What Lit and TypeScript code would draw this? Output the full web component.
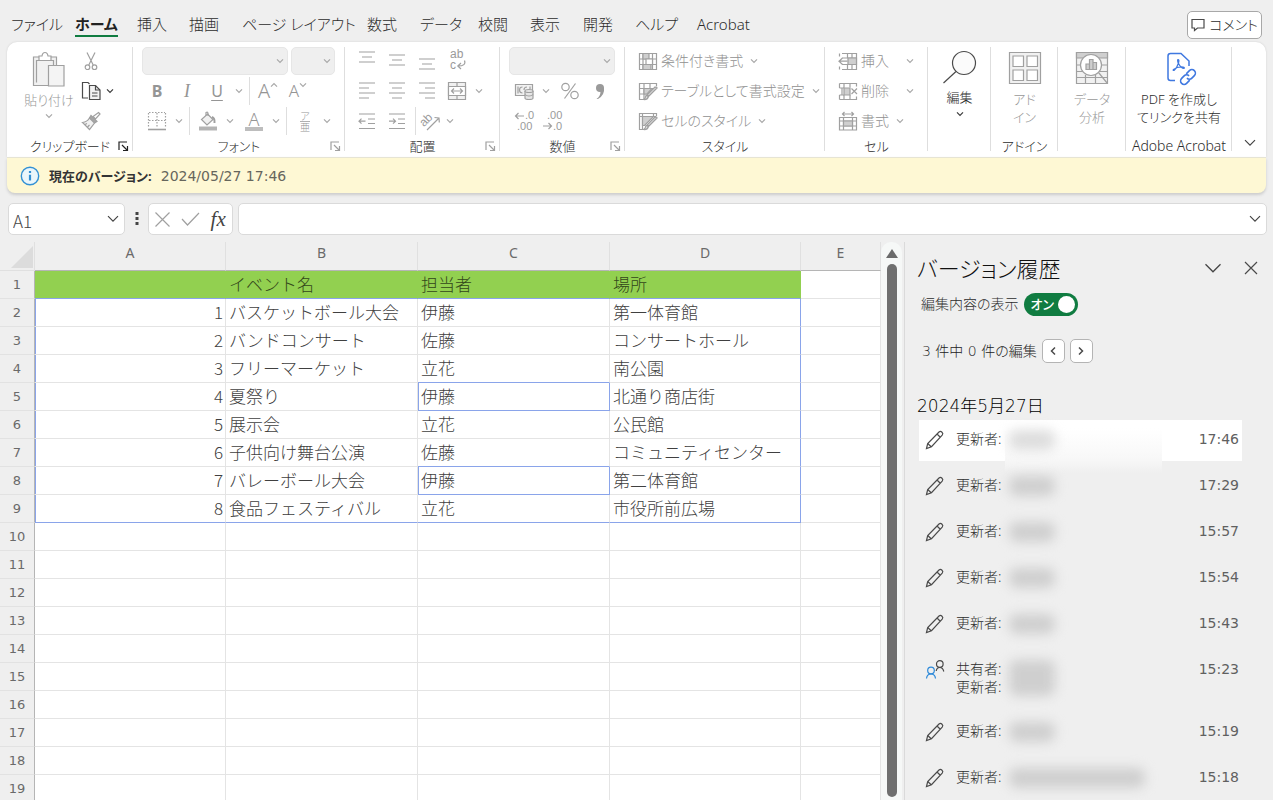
import { LitElement, html, svg, css, nothing } from "lit";
import { customElement } from "lit/decorators.js";
import { classMap } from "lit/directives/class-map.js";

const chevron = (cls = "") => html`<svg class="chev ${cls}" viewBox="0 0 8 6" aria-hidden="true"><path d="M1 1.3 4 4.3 7 1.3" /></svg>`;

const icon = (body: unknown, w = 20, h = 20, cls = "") =>
  html`<svg class="ico ${cls}" width=${w} height=${h} viewBox="0 0 ${w} ${h}" aria-hidden="true">${body}</svg>`;

const ICONS = {
  paste: icon(svg`
    <path class="tint" d="M1.500 5.500H24V34.500H1.500z" stroke="none"/>
    <path d="M17 34.500H1.500V6H7M19 6h5.500v8"/><path d="M4.500 31.500V9.500H21.500V14"/>
    <path fill="#fff" d="M7 9.500V5h3q.5-3.500 3-3.500T16 5h3v4.500z"/>
    <path fill="#f4f4f4" d="M16.500 14.500h15.500v20.500H16.500z"/>`, 34, 36),
  cut: icon(svg`<path d="M6 1.500 12.200 14M14 1.500 7.800 14"/><circle cx="6.500" cy="16.200" r="2.300"/><circle cx="13.500" cy="16.200" r="2.300"/>`),
  copy: icon(svg`<path d="M7 17H1.500V1.500h5.500l1.500 1.500"/><path class="tint" d="M8.500 4.500h6l4.500 4.500v9.500H8.500z"/><path d="M14.500 4.500V9H19M11 12h5.500M11 15h5.500"/>`, 20, 20, "dark"),
  brush: icon(svg`<path d="M17.500 1.500 19 3l-4.500 5-2.500-2.500z"/><path d="M10 4.500l6 6-2.500 1.500-5-5z" fill="#a6a6a6"/><path class="tint" d="M8.500 7 13.500 12l-5 6.500L1.500 11.500Q6 11 8.500 7z"/><path d="M4 13.500l2-1M6.500 16l2-2"/>`),
  border: icon(svg`<path stroke-dasharray="1.500 1.500" d="M2 1.500h16M1.500 2v15M18.500 2v15M10 2v15M2 9.500h16"/><path stroke-width="1.600" d="M1 18.500h18"/>`),
  fill: icon(svg`<path class="tint" d="M9.500 3 15 8.500 9 14 3.500 8.500z"/><path d="M8 4.500V1.500q2-1 2 1V5"/><path stroke-width="2" d="M14 6q3 1 2.500 6"/><path class="solid" d="M1 15.500h18v4H1z"/>`),
  indentDec: icon(svg`<path d="M2 3h16M11 8h7M11 12.500h7M2 17.500h16M8.500 10.200H2M4.500 7.700 2 10.200l2.500 2.500"/>`),
  indentInc: icon(svg`<path d="M2 3h16M11 8h7M11 12.500h7M2 17.500h16M2 10.200h6.500M6 7.700l2.500 2.500L6 12.700"/>`),
  merge: icon(svg`<path class="tint" d="M1.500 1.500h17v17h-17z"/><path d="M1.500 5.500h17M1.500 14.500h17M10 1.500v4M10 14.500v4"/><path fill="#fff" d="M1.500 5.500h17v9h-17z"/><path d="M4.500 10h11M7 7.500 4.500 10 7 12.500M13 7.500l2.500 2.500-2.500 2.500"/>`),
  orient: icon(svg`<path d="M7 19 19 7M14.500 6.500 19 7l.3 4.500"/><text x="0" y="13" font-size="12" transform="rotate(-45 6 10)">ab</text>`, 22, 20),
  wrap: icon(svg`<text x="3" y="7" font-size="12">ab</text><text x="3" y="18" font-size="12">c</text><path d="M17.500 9.500q2 5.500-6.500 5.500M14 12l-3.200 3 3.200 3"/>`),
  currency: icon(svg`<path class="tint" d="M1.500 3.500h17v11h-17z"/><path d="M4 5.500v7M16 5.500V8M8.500 6q-3 0-3 3t3 3M13 6q-3 0-3 3"/><path fill="#e6e6e6" d="M11 10v7q0 1.500 4 1.500t4-1.500v-7"/><ellipse fill="#e6e6e6" cx="15" cy="10" rx="4" ry="1.500"/><path d="M11 13.500q1 1.500 4 1.500t4-1.500"/>`),
  percent: icon(svg`<circle cx="5.500" cy="6" r="3.700"/><circle cx="14.500" cy="14" r="3.700"/><path d="M15.500 2.500 4.500 17.500"/>`),
  comma: icon(svg`<circle class="solid3" cx="10" cy="7" r="4"/><path class="solid3" d="M10 10.500l4-4q1 7.500-6 11.500H6.500q4-3 4-7.500z"/>`),
  decInc: icon(svg`<text x="11" y="8" font-size="11">.0</text><text x="3" y="19" font-size="11">.00</text><path d="M10 5H1.500M4.500 2 1.500 5l3 3"/>`, 20, 20),
  decDec: icon(svg`<text x="3" y="8" font-size="11">.00</text><text x="9" y="19" font-size="11">.0</text><path d="M-1 15h8M4.500 12l3 3-3 3"/>`, 20, 20),
  cond: icon(svg`<path d="M1.500 2.500h17v16h-17zM1.500 8h17M1.500 13.500h17M5 2.500v16M14.500 2.500v16"/><path class="solid2" d="M5 2.500h6V8H5zM5 13.500h8v5H5z"/><path fill="#fff" d="M8 8h6.500v5.500H8z"/>`),
  tableFmt: icon(svg`<path d="M12 2.500H1.500v16H6M1.500 7.500H16M1.500 13H9M6 2.500v16M12 2.500v6M12 2.500h6.500v3"/><path class="solid2" d="M6 7.500h8l-5 5.500H6z"/><path fill="#ddd" d="M19 7 11 15l-2-1 8-8zM10.500 15.500q-1 3.500-5 3 2-1 2.500-4z"/>`),
  cellStyle: icon(svg`<path d="M8 18.500H1.500v-16h17v3M1.500 5.500H18M4.500 2.500v16M15.500 2.500V5"/><path class="solid2" d="M4.500 5.500h11l-9 9h-2z"/><path fill="#ddd" d="M19 7 11 15l-2-1 8-8zM10.500 15.500q-1 3.500-5 3 2-1 2.500-4z"/>`),
  insert: icon(svg`<path d="M4 2.500h14.500v16H4M4 7h14.500M4 13.500h14.500M14 2.500v16M9.500 2.500V7M9.500 13.500v5M1.500 2.500v3M1.500 15.500v3"/><path class="solid2" d="M10 7h8.500v6.500H10z"/><path d="M9.500 10.200H1M4.500 7 1 10.200l3.500 3.300"/>`),
  remove: icon(svg`<path d="M1.500 2.500h17v3M1.500 2.500V7M1.500 18.500h17v-3M1.500 18.500V14M1.500 7h5M1.500 14h5M6 2.500v4M12 2.500v4M6 14v4.500M12 14v4.500M4 7v7"/><path class="solid2" d="M6 7h6v7H6z"/><path d="M13.500 7.500l5.500 5.500M19 7.500 13.500 13"/>`),
  format: icon(svg`<path d="M4.500 3h11M6.500 1l-2 2 2 2M13.500 1l2 2-2 2M1.500 6.500h17v12.500h-17zM1.500 10h17M1.500 15h17M5.500 6.500V19M14.500 6.500V19"/><path class="solid2" d="M5.500 10h9v5h-9z"/>`),
  find: icon(svg`<circle cx="22" cy="12" r="11.500" fill="#fbfbfb"/><path d="M14 20.500 1.500 32"/>`, 36, 32, "dark"),
  addin: icon(svg`<path class="tint" d="M1.500 1.500h31v31h-31z"/><path fill="#fff" d="M5 5h10.500v10.500H5zM19 5h10.500v10.500H19zM5 19h10.500v10.500H5zM19 19h10.500v10.500H19z"/>`, 34, 34),
  analyze: icon(svg`<path class="tint" d="M1.500 1.500h31v31h-31z"/><path class="solid2" d="M1.500 1.500h31V7h-31z"/><path d="M1.500 14h31M1.500 20.500h31M1.500 26.500h31M10.500 24v8.500M20.500 24v8.500"/><circle cx="16" cy="14" r="10.500" fill="#fff"/><path d="M23.500 21.500l9 11"/><path class="solid2" d="M11 13h3.500v5.500H11zM14.500 8.500H18v10h-3.500zM18 11.500h3.500v7H18z"/>`, 34, 34),
  pdf: icon(svg`<path stroke-width="1.500" d="M13 29.500H8.500Q6 29.500 6 27V5Q6 2.500 8.500 2.500H19l8 7.500v5"/><path d="M16 8.500q1.500 0 .5 3.500-1.500 5-4.500 7.500-1.500 0-.5-1 4-3 9.500-2.500 2 .5 1 1.500-3 0-6-6-.8-3 0-3z"/><g stroke-width="1.600" transform="rotate(-45 26 26)"><path d="M25 29.500h-4.500a3.500 3.500 0 0 1 0-7h3.500a3.500 3.500 0 0 1 3.500 3.500"/><path d="M27 22.500h4.500a3.500 3.500 0 0 1 0 7h-3.500a3.500 3.500 0 0 1-3.500-3.500"/></g>`, 34, 34, "blue"),
  comment: icon(svg`<path d="M1 1.500h12v8.500H6.500L3.500 12.500V10H1z"/>`, 14, 14, "dark"),
  info: icon(svg`<circle cx="10" cy="10" r="8.700" fill="#eaf6fb" stroke-width="1.400"/><path stroke-width="2.200" d="M10 8.800v5.700M10 5v2"/>`, 20, 20, "azure"),
  launcher: icon(svg`<path d="M1 9V1h8M4 4l5.500 5.500M9.500 5v4.500H5"/>`, 11, 11, "sm"),
  pencil: icon(svg`<path d="M1.500 18.500l1.200-5L14 2q1.500-1.200 3 .2t.2 3L6.500 16.700zM12 4l3.300 3.200M2.700 13.500l3.500 3.300"/>`, 20, 20, "dark"),
  people: icon(svg`<g stroke="#2b88d8"><circle cx="6" cy="10.500" r="3.300"/><path d="M1.500 18.500q.5-4.500 4.500-4.500t4.500 4.500"/></g><g><circle cx="14.800" cy="4" r="3.300"/><path d="M11.200 11q.5-3.500 3.600-3.500t4 4"/></g>`, 20, 20, "dark"),
};

const hAlign = (long: number[], short: number[], dir: string, top: number) => {
  const inner = dir === "l" ? [2, 12] : dir === "r" ? [8, 18] : [5, 15];
  return icon(svg`<path d=${long.map((y) => `M2 ${y + top}h16`).join("") + short.map((y) => `M${inner[0]} ${y + top}H${inner[1]}`).join("")} />`);
};

interface Version { users: string[]; time: string; current?: boolean; wide?: boolean }

@customElement("app-root")
export class AppRoot extends LitElement {
  private tabs = ["ファイル", "ホーム", "挿入", "描画", "ページ レイアウト", "数式", "データ", "校閲", "表示", "開発", "ヘルプ", "Acrobat"];

  private rows: string[][] = [
    ["", "イベント名", "担当者", "場所"],
    ["1", "バスケットボール大会", "伊藤", "第一体育館"],
    ["2", "バンドコンサート", "佐藤", "コンサートホール"],
    ["3", "フリーマーケット", "立花", "南公園"],
    ["4", "夏祭り", "伊藤", "北通り商店街"],
    ["5", "展示会", "立花", "公民館"],
    ["6", "子供向け舞台公演", "佐藤", "コミュニティセンター"],
    ["7", "バレーボール大会", "伊藤", "第二体育館"],
    ["8", "食品フェスティバル", "立花", "市役所前広場"],
  ];

  private changed = [5, 8];

  private versions: Version[] = [
    { users: ["更新者:"], time: "17:46", current: true },
    { users: ["更新者:"], time: "17:29" },
    { users: ["更新者:"], time: "15:57" },
    { users: ["更新者:"], time: "15:54" },
    { users: ["更新者:"], time: "15:43" },
    { users: ["共有者:", "更新者:"], time: "15:23" },
    { users: ["更新者:"], time: "15:19" },
    { users: ["更新者:"], time: "15:18", wide: true },
  ];

  static styles = css`
    :host {
      display: flex;
      flex-direction: column;
      height: 100vh;
      overflow: hidden;
      background: #efefef;
      color: #2c2c2c;
      font: 300 14px/18px "Noto Sans", "Noto Sans CJK JP", sans-serif;
      font-feature-settings: "palt";
    }
    * { box-sizing: border-box; }
    button, input, select { font: inherit; color: inherit; font-feature-settings: inherit; margin: 0; padding: 0; border: 0; background: none; }
    button { display: inline-flex; align-items: center; justify-content: center; }
    .ico { display: block; flex: none; overflow: visible; fill: none; stroke: #a0a0a0; stroke-width: 1.2; }
    .ico text { fill: #9a9a9a; stroke: none; font-family: "Liberation Sans", sans-serif; }
    .ico .tint { fill: #f1f1f1; }
    .ico .solid { fill: #b4b4b4; stroke: none; }
    .ico .solid3 { fill: #9a9a9a; stroke: none; }
    .ico .solid2 { fill: #cfcfcf; }
    .ico.dark { stroke: #4a4a4a; }
    .ico.blue { stroke: #3f78e0; }
    .ico.azure { stroke: #3391d4; }
    .chev { width: 8px; height: 6px; flex: none; fill: none; stroke: #a8a8a8; stroke-width: 1.2; }
    .chev.dark { stroke: #3b3b3b; }
    .chev.big { width: 14px; height: 10px; stroke: #444; stroke-width: 0.7; }
    .chev.huge { width: 20px; height: 15px; stroke: #444; stroke-width: 0.5; }

    .top { display: flex; align-items: center; justify-content: space-between; height: 42px; padding: 7px 11px 0; flex: none; }
    .tabs { display: grid; grid-template-columns: 64px 62px 52px 53px 125px 53px 58px 52px 53px 52px 62px 60px; font-size: 15px; line-height: 22px; }
    .tab { justify-self: start; color: inherit; text-decoration: none; white-space: nowrap; padding-top: 1px; border-bottom: 2px solid transparent; }
    .tab.active { font-weight: 700; color: #222; border-color: #107c41; }
    .comment { width: 75px; height: 28px; gap: 4px; border: 1px solid #a8a8a8; border-radius: 5px; background: #fff; white-space: nowrap; }

    .ribbon { display: grid; grid-template-columns: 126px 212px 155px 125px 200px 103px 63px 67px 68px 106px minmax(35px, 1fr); margin: 0 7px; height: 115px; flex: none; background: #fff; border-radius: 10px 10px 0 0; box-shadow: 0 0 2px #ccc; }
    .group { display: flex; flex-direction: column; padding-top: 3px; background: linear-gradient(#dedede, #dedede) right 5px / 1px 104px no-repeat; }
    .group:last-child { background: none; }
    .body { height: 90px; flex: none; padding-top: 1px; }
    .foot { display: grid; grid-template-columns: 20px 1fr 20px; align-items: center; height: 22px; text-align: center; font-size: 13px; white-space: nowrap; }
    .foot.plain { grid-template-columns: 1fr; }
    .foot.caps { font-size: 14px; }
    .foot.dark .ico { stroke: #222; }
    .line { display: flex; align-items: center; height: 30px; }
    .ib { width: 30px; height: 28px; color: #959595; font-size: 16px; font-weight: 400; }
    .ib.narrow { width: 24px; }
    .cv { width: 14px; height: 28px; }
    .sep { width: 7px; height: 28px; background: linear-gradient(#dedede, #dedede) center / 1px 28px no-repeat; }
    .gap { width: 2px; }
    .ib.b { font-weight: 700; }
    .i { font-style: italic; font-family: "Liberation Serif", serif; font-size: 18px; }
    .u { text-decoration: underline; text-underline-offset: 3px; }
    .ib.grow { font-size: 20px; font-weight: 300; }
    .ib.shrink { font-size: 17px; font-weight: 300; }
    .grow .chev, .shrink .chev { align-self: flex-start; margin-top: 5px; }
    .up { transform: rotate(180deg); }
    .ib.fontcolor { flex-direction: column; font-size: 18px; line-height: 16px; font-weight: 300; }
    .fontcolor::after { content: ""; width: 18px; height: 4px; background: #bdbdbd; }
    .ib.ruby { flex-direction: column; font-size: 10px; line-height: 10px; font-weight: 300; }
    .ruby span + span { border-top: 1px solid #b0b0b0; }
    .pad-s { padding-left: 7px; }
    .pad-m { padding-left: 9px; }
    .pad-l { padding-left: 13px; }
    .combo { display: grid; align-items: center; height: 28px; }
    .combo > * { grid-area: 1 / 1; }
    .combo select { width: 100%; height: 100%; appearance: none; background: #efefef; border: 1px solid #e6e6e6; border-radius: 5px; opacity: 1; }
    .combo .chev { justify-self: end; margin-right: 4px; pointer-events: none; }
    .combo.name { width: 146px; margin-right: 3px; }
    .combo.size { width: 44px; }
    .combo.num { width: 106px; }
    .clip { display: grid; grid-template-columns: 60px 1fr; padding-left: 12px; }
    .large { display: flex; flex-direction: column; align-items: center; justify-content: flex-start; gap: 5px; width: 100%; height: 90px; padding-top: 6px; font-size: 13px; white-space: nowrap; }
    .clip .large { padding-top: 5px; gap: 4px; }
    .large.off { color: #989898; }
    .wide { gap: 3px; height: 28px; color: #909090; white-space: nowrap; }
    .wide .chev { margin-left: 4px; }
    .far .chev { margin-left: 14px; }
    .collapse { width: 100%; height: 30px; margin-top: 83px; }

    .banner { display: flex; align-items: center; gap: 9px; height: 36px; margin: 0 7px; padding: 0 13px; flex: none; background: #fef8d4; border-radius: 0 0 8px 8px; border-top: 1px solid #e6e4d4; box-shadow: 0 2px 3px #ccc; }
    .banner strong { color: #333; font-size: 13px; font-weight: 700; }
    .digits { font-family: "DejaVu Sans", "Noto Sans CJK JP", sans-serif; }
    .banner .digits { color: #66665c; font-weight: 400; }

    .formula { display: grid; grid-template-columns: 117px 23px 86px 1fr; margin: 10px 6px 0 8px; height: 32px; flex: none; }
    .box { display: flex; align-items: center; background: #fff; border: 1px solid #dadada; border-radius: 5px; }
    .box input { flex: 1; min-width: 0; height: 100%; padding: 2px 4px 0; }
    .namebox input { font-family: "Noto Sans CJK JP", sans-serif; font-size: 17px; color: #444; font-feature-settings: normal; }
    .box button { width: 22px; height: 28px; }
    .box.fx { margin-right: 1px; justify-content: space-around; }
    .box.fx button { width: 28px; }
    .box.last { margin-left: 4px; }
    .fxl { font: italic 21px/24px "Liberation Serif", serif; color: #444; }
    .dots { display: grid; place-items: center; }

    .main { display: grid; grid-template-columns: minmax(0, 1fr) 23px 369px; flex: 1; min-height: 0; margin-top: 7px; }
    .sheet { overflow: hidden; }
    table { width: 100%; border-collapse: separate; border-spacing: 0; table-layout: fixed; font-feature-settings: normal; }
    col.n { width: 35px; }
    col.d { width: 192px; }
    col.a { width: 191px; }
    th { font-weight: 400; color: #6a6a6a; padding: 0; }
    thead th { height: 29px; padding-bottom: 7px; border-bottom: 1px solid #b5b5b5; border-right: 1px solid #e0e0e0; }
    thead th:first-child { padding: 0 1px 1px 11px; border-color: #e0e0e0; }
    thead svg { display: block; width: 22px; height: 22px; margin-top: 3px; fill: #dcdcdc; }
    tbody th { height: 28px; font: 13px/20px "DejaVu Sans", sans-serif; border-right: 1px solid #b5b5b5; border-bottom: 1px solid #e2e2e2; }
    td { height: 28px; padding: 0 2px 2px 3px; background: #fff; border-right: 1px solid #e4e4e4; border-bottom: 1px solid #e4e4e4; color: #404040; font: 300 17px/20px "Noto Sans CJK JP", sans-serif; white-space: nowrap; overflow: hidden; }
    td.num { text-align: right; }
    td.green { background: #92d050; border-right-color: #92d050; color: #32461a; }
    td.bb { border-bottom-color: #8aa4ea; }
    td.br { border-right-color: #8aa4ea; }
    td.bl { box-shadow: inset 1px 0 #8aa4ea; }

    .scroll { display: flex; flex-direction: column; align-items: center; gap: 6px; margin-right: 2px; padding: 7px 0 3px; background: #f6f8f7; border-radius: 10px 10px 0 0; }
    .scroll svg { width: 12px; height: 9px; fill: #6b6b6b; flex: none; }
    .thumb { width: 10px; flex: 1; border-radius: 5px; background: #6f6f6f; }

    .panel { border-left: 1px solid #dadada; padding: 10px 12px 0 12px; overflow: hidden; min-width: 0; }
    .head { display: flex; align-items: center; height: 32px; }
    h2 { flex: 1; margin: 0; font-size: 22px; line-height: 32px; font-weight: 300; color: #111; white-space: nowrap; }
    .head button { width: 20px; height: 24px; margin-left: 18px; }
    .toggle { display: flex; align-items: center; gap: 5px; margin-top: 8px; padding-left: 4px; height: 24px; }
    .switch { display: grid; align-items: center; width: 54px; height: 23px; }
    .switch > * { grid-area: 1 / 1; }
    .switch input { appearance: none; width: 100%; height: 100%; border-radius: 12px; background: #107c41; }
    .switch span { padding-left: 7px; color: #fff; font-size: 13px; font-weight: 500; pointer-events: none; }
    .switch i { justify-self: end; width: 17px; height: 17px; margin-right: 3px; border-radius: 50%; background: #fff; pointer-events: none; }
    .count { display: flex; align-items: center; gap: 5px; margin-top: 23px; padding-left: 5px; height: 24px; color: #222; }
    .count button { width: 23px; height: 24px; border: 1px solid #b4b4b4; border-radius: 5px; background: #fff; }
    h3 { margin: 32px 0 3px; font: 300 17px/22px "DejaVu Sans", "Noto Sans CJK JP", sans-serif; color: #000; }
    ol { display: flex; flex-direction: column; gap: 5px; margin: 0 19px 0 2px; padding: 0; list-style: none; }
    .ver { position: relative; display: grid; grid-template-columns: 20px 47px 1fr auto; width: 100%; align-items: start; justify-content: stretch; column-gap: 5px; padding: 10px 3px 11px 6px; text-align: left; }
    .ver.current { background: #fff; }
    .ver.current::after { content: ""; position: absolute; left: 86px; top: 8px; width: 157px; height: 45px; background: linear-gradient(#fff0, #fafafa 50%, #f7f7f7 72%, #efefef); }
    .who { display: grid; padding-left: 6px; margin-right: -6px; white-space: nowrap; }
    .blob { z-index: 1; align-self: stretch; margin-left: 7px; width: 46px; border-radius: 8px; background: #cfcfcf; filter: blur(6px); }
    .current .blob { background: #dddddd; }
    .blob.wide-blob { width: 136px; }
    .time { font-family: "DejaVu Sans", sans-serif; font-weight: 400; color: #606060; }
  `;

  private ib(label: string, content: unknown, cls = "") {
    return html`<button class="ib ${cls}" aria-label=${label}>${content}</button>`;
  }

  private cv(label: string, cls = "") {
    return html`<button class="cv" aria-label="${label} オプション">${chevron(cls)}</button>`;
  }

  private foot(label: string, launcher = true, cls = "") {
    return html`<div class="foot ${cls} ${launcher ? "" : "plain"}">${launcher ? html`<span></span>` : nothing}<span>${label}</span>${launcher ? html`<button aria-label="${label}の設定">${ICONS.launcher}</button>` : nothing}</div>`;
  }

  private combo(label: string, cls: string) {
    return html`<div class="combo ${cls}"><select disabled aria-label=${label}></select>${chevron()}</div>`;
  }

  private wide(ic: unknown, label: string, cls = "") {
    return html`<div class="line pad-l"><button class="wide ${cls}">${ic}<span>${label}</span>${chevron()}</button></div>`;
  }

  private ribbon() {
    const sep = html`<span class="sep"></span>`;
    const gap = html`<span class="gap"></span>`;
    return html`<section class="ribbon" aria-label="リボン">
      <div class="group">
        <div class="body clip">
          <button class="large off">${ICONS.paste}<span>貼り付け</span>${chevron()}</button>
          <div>
            <div class="line">${this.ib("切り取り", ICONS.cut, "narrow")}</div>
            <div class="line">${this.ib("コピー", ICONS.copy, "narrow")}${this.cv("コピー", "dark")}</div>
            <div class="line">${this.ib("書式のコピー", ICONS.brush, "narrow")}</div>
          </div>
        </div>
        ${this.foot("クリップボード", true, "dark")}
      </div>
      <div class="group">
        <div class="body pad-m">
          <div class="line">${this.combo("フォント", "name")}${this.combo("サイズ", "size")}</div>
          <div class="line">${this.ib("太字", "B", "b")}${this.ib("斜体", "I", "i")}${this.ib("下線", "U", "u")}${this.cv("下線")}${sep}${this.ib("拡大", html`A${chevron("up")}`, "grow")}${this.ib("縮小", html`A${chevron()}`, "shrink")}</div>
          <div class="line">${this.ib("罫線", ICONS.border)}${this.cv("罫線")}${sep}${this.ib("塗りつぶし", ICONS.fill)}${this.cv("塗りつぶし")}${gap}${this.ib("文字色", "A", "fontcolor")}${this.cv("文字色")}${sep}${this.ib("ふりがな", html`<span>ア</span><span>亜</span>`, "ruby")}${this.cv("ふりがな")}</div>
        </div>
        ${this.foot("フォント")}
      </div>
      <div class="group">
        <div class="body pad-s">
          <div class="line">${this.ib("上揃え", hAlign([0, 10], [5], "c", 1))}${this.ib("上下中央", hAlign([0, 10], [5], "c", 4))}${this.ib("下揃え", hAlign([0, 10], [5], "c", 8))}${this.ib("折り返し", ICONS.wrap)}</div>
          <div class="line">${this.ib("左揃え", hAlign([0, 10], [5, 15], "l", 2))}${this.ib("中央揃え", hAlign([0, 10], [5, 15], "c", 2))}${this.ib("右揃え", hAlign([0, 10], [5, 15], "r", 2))}${this.ib("結合", ICONS.merge)}${this.cv("結合")}</div>
          <div class="line">${this.ib("インデント減", ICONS.indentDec)}${this.ib("インデント増", ICONS.indentInc)}${sep}${this.ib("方向", ICONS.orient, "narrow")}${this.cv("方向")}</div>
        </div>
        ${this.foot("配置")}
      </div>
      <div class="group">
        <div class="body pad-m">
          <div class="line">${this.combo("表示形式", "num")}</div>
          <div class="line">${this.ib("通貨", ICONS.currency)}${this.cv("通貨")}${gap}${this.ib("パーセント", ICONS.percent)}${this.ib("桁区切り", ICONS.comma)}</div>
          <div class="line">${this.ib("小数点以下を増やす", ICONS.decInc)}${this.ib("小数点以下を減らす", ICONS.decDec)}</div>
        </div>
        ${this.foot("数値")}
      </div>
      <div class="group">
        <div class="body">
          ${this.wide(ICONS.cond, "条件付き書式")}${this.wide(ICONS.tableFmt, "テーブルとして書式設定")}${this.wide(ICONS.cellStyle, "セルのスタイル")}
        </div>
        ${this.foot("スタイル", false)}
      </div>
      <div class="group">
        <div class="body">
          ${this.wide(ICONS.insert, "挿入", "far")}${this.wide(ICONS.remove, "削除", "far")}${this.wide(ICONS.format, "書式")}
        </div>
        ${this.foot("セル", false)}
      </div>
      <div class="group"><button class="large">${ICONS.find}<span>編集</span>${chevron("dark")}</button></div>
      <div class="group"><button class="large off">${ICONS.addin}<span>アド<br />イン</span></button>${this.foot("アドイン", false)}</div>
      <div class="group"><button class="large off">${ICONS.analyze}<span>データ<br />分析</span></button></div>
      <div class="group"><button class="large">${ICONS.pdf}<span>PDF を作成し<br />てリンクを共有</span></button>${this.foot("Adobe Acrobat", false, "caps")}</div>
      <div class="group"><button class="collapse" aria-label="リボンを折りたたむ">${chevron("big")}</button></div>
    </section>`;
  }

  private sheet() {
    return html`<div class="sheet"><table>
      <colgroup><col class="n" /><col class="a" /><col class="d" /><col class="d" /><col class="a" /><col /></colgroup>
      <thead><tr>
        <th aria-label="すべて選択"><svg viewBox="0 0 22 22"><path d="M22 0v22H0z" /></svg></th>
        ${["A", "B", "C", "D", "E"].map((c) => html`<th scope="col">${c}</th>`)}
      </tr></thead>
      <tbody>${Array.from({ length: 19 }, (_, i) => i + 1).map((n) => html`<tr>
        <th scope="row">${n}</th>
        ${[0, 1, 2, 3, 4].map((c) => {
          const inside = c < 4 && n >= 2 && n <= 9;
          const mark = c === 2 && this.changed.includes(n);
          return html`<td class=${classMap({
            num: c === 0,
            green: n === 1 && c < 4,
            bb: (c < 4 && (n === 1 || n === 9)) || mark || (c === 2 && this.changed.includes(n + 1)),
            br: (inside && c === 3) || mark,
            bl: (inside && c === 0) || mark,
          })}>${this.rows[n - 1]?.[c] ?? ""}</td>`;
        })}
      </tr>`)}</tbody>
    </table></div>`;
  }

  private panel() {
    return html`<aside class="panel">
      <div class="head">
        <h2>バージョン履歴</h2>
        <button aria-label="オプション">${chevron("huge")}</button>
        <button aria-label="閉じる">${icon(svg`<path d="M1 1l12 12M13 1 1 13"/>`, 14, 14, "dark")}</button>
      </div>
      <div class="toggle">
        <label for="show">編集内容の表示</label>
        <div class="switch"><input id="show" type="checkbox" role="switch" checked /><span>オン</span><i></i></div>
      </div>
      <div class="count">
        <span class="digits">3 件中 0 件の編集</span>
        <button aria-label="前へ">${icon(svg`<path stroke-width="1.500" d="M6 1.500 2.500 5 6 8.500"/>`, 8, 10, "dark")}</button>
        <button aria-label="次へ">${icon(svg`<path stroke-width="1.500" d="M2 1.500 5.500 5 2 8.500"/>`, 8, 10, "dark")}</button>
      </div>
      <h3>2024年5月27日</h3>
      <ol>${this.versions.map((v) => html`<li><button class=${classMap({ ver: true, current: !!v.current })}>
        ${v.users.length > 1 ? ICONS.people : ICONS.pencil}
        <span class="who">${v.users.map((u) => html`<span>${u}</span>`)}</span>
        <span class=${classMap({ blob: true, "wide-blob": !!v.wide })}></span>
        <span class="time">${v.time}</span>
      </button></li>`)}</ol>
    </aside>`;
  }

  render() {
    return html`
      <header class="top">
        <nav class="tabs">${this.tabs.map((t, i) => html`<a href="#" class="tab ${i === 1 ? "active" : ""}">${t}</a>`)}</nav>
        <button class="comment">${ICONS.comment}コメント</button>
      </header>
      ${this.ribbon()}
      <div class="banner">${ICONS.info}<strong>現在のバージョン:</strong><span class="digits">2024/05/27 17:46</span></div>
      <div class="formula">
        <div class="box namebox"><input aria-label="名前ボックス" value="A1" /><button aria-label="名前の一覧">${chevron("big")}</button></div>
        <span class="dots"><svg width="4" height="14" viewBox="0 0 4 14" fill="#444"><path d="M.5 0h3v3h-3zM.5 5h3v3h-3zM.5 10h3v3h-3z" /></svg></span>
        <div class="box fx">
          <button aria-label="キャンセル">${icon(svg`<path d="M1.500 1.500l14 14M15.500 1.500l-14 14"/>`, 17, 17)}</button>
          <button aria-label="入力">${icon(svg`<path d="M1 8l5.500 6L18 2"/>`, 19, 16)}</button>
          <button aria-label="関数の挿入"><span class="fxl">fx</span></button>
        </div>
        <div class="box last"><input aria-label="数式バー" /><button aria-label="数式バーの展開">${chevron("big")}</button></div>
      </div>
      <div class="main">
        ${this.sheet()}
        <div class="scroll"><svg viewBox="0 0 12 9"><path d="M6 0l6 9H0z" /></svg><div class="thumb"></div></div>
        ${this.panel()}
      </div>
    `;
  }
}
